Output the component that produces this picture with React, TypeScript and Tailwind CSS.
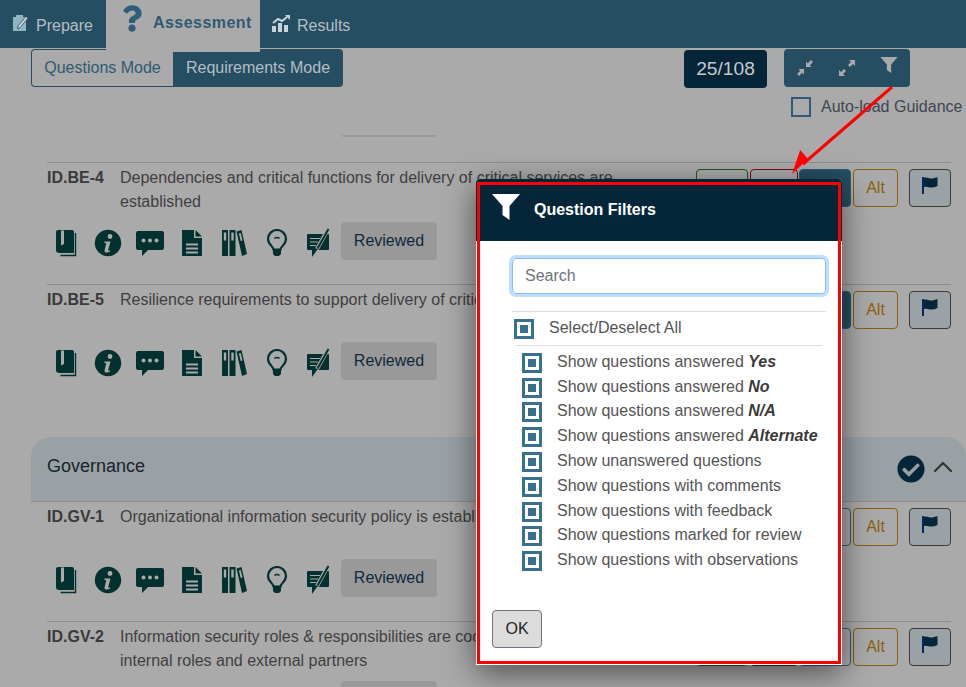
import { FaCheckCircle, FaQuestion } from "react-icons/fa";
import { ChevronUp } from "lucide-react";

const ICON = "#02312f";
const BG = "#aaaaaa";

function BookIcon() {
  return (
    <svg width="28" height="28" viewBox="0 0 28 28">
      <path fillRule="evenodd" fill={ICON} d="M6 1h14a2 2 0 0 1 2 2v21H7a3 3 0 0 1-3-3V3a2 2 0 0 1 2-2zM9 1.500v15l3-1.500v-13.500z" />
      <path d="M23.500 4v22.500H8.500" fill="none" stroke={ICON} strokeWidth="1.400" />
    </svg>
  );
}

function InfoIcon() {
  return (
    <svg width="28" height="28" viewBox="0 0 28 28">
      <circle cx="14" cy="14" r="13.200" fill={ICON} />
      <circle cx="16" cy="7.500" r="2.400" fill={BG} />
      <path d="M10.500 12.500h6l-2.300 8.500c-.2.800.4 1 1.900.3l-.3 1.500c-2 1-6 1.500-5.200-1.800l1.700-6.700-1.900-.4z" fill={BG} />
    </svg>
  );
}

function ChatIcon() {
  return (
    <svg width="28" height="28" viewBox="0 0 28 28">
      <path fill={ICON} d="M2 2h24a2 2 0 0 1 2 2v15a2 2 0 0 1-2 2H12l-6 6v-6H2a2 2 0 0 1-2-2V4a2 2 0 0 1 2-2z" />
      <circle cx="7.500" cy="11.500" r="2" fill={BG} />
      <circle cx="14" cy="11.500" r="2" fill={BG} />
      <circle cx="20.500" cy="11.500" r="2" fill={BG} />
    </svg>
  );
}

function FileIcon() {
  return (
    <svg width="28" height="28" viewBox="0 0 28 28">
      <path fillRule="evenodd" fill={ICON} d="M4 1h12v8h8v18H4zM8 14.500v2h12v-2zM8 18.500v2h12v-2zM8 22.500v2h12v-2z" />
      <path fill={ICON} d="M17.500 1l6.500 6.500h-6.500z" />
    </svg>
  );
}

function BooksIcon() {
  return (
    <svg width="28" height="28" viewBox="0 0 28 28">
      <path fillRule="evenodd" fill={ICON} d="M2 1h6v26H2zM3.800 3.500v8h2.400v-8z" />
      <path fillRule="evenodd" fill={ICON} d="M9.500 1h6v26h-6zM11.300 3.500v8h2.400v-8z" />
      <path fillRule="evenodd" fill={ICON} d="M16.500 2.500l5-1.500 5.500 24-5 2zM18.900 4.500l1.800 7.500 1.800-.5-1.800-7.500z" />
    </svg>
  );
}

function BulbIcon() {
  return (
    <svg width="28" height="28" viewBox="0 0 28 28">
      <path d="M10.500 20.500c0-3-5.500-5-5.500-10.500a9 9 0 0 1 18 0c0 5.500-5.500 7.500-5.500 10.500z" fill="none" stroke={ICON} strokeWidth="2.200" />
      <path d="M11.500 9.500a3.500 3.500 0 0 1 5 0" fill="none" stroke={ICON} strokeWidth="1.500" />
      <path fill={ICON} d="M10 20h8v5l-2 2h-4l-2-2z" />
    </svg>
  );
}

function NoteIcon() {
  return (
    <svg width="28" height="30" viewBox="0 0 28 30">
      <path fill={ICON} d="M4 6h20a1 1 0 0 1 1 1v14a1 1 0 0 1-1 1H13l-5 7v-7H4a1 1 0 0 1-1-1V7a1 1 0 0 1 1-1z" />
      <path stroke={BG} strokeWidth="1.200" d="M6 10.500h10M6 14h8M6 17.500h6" />
      <path d="M13 21L23.500 2" stroke={BG} strokeWidth="4" />
      <path d="M13.500 20.500L24.500 1" stroke={ICON} strokeWidth="2" />
    </svg>
  );
}

function Flag() {
  return (
    <svg width="16" height="17" viewBox="0 0 16 17">
      <path d="M0 0h2v17H0z" fill="#04285a" />
      <path d="M2 1c3-1.500 5 1 8 .5 2-.3 4-1 5.500-1.500v9c-2 1-4 1.500-6 1.500-3 0-5-1.500-7.500-.5z" fill="#042638" />
    </svg>
  );
}

function Funnel({ className }: { className: string }) {
  return (
    <svg className={className} viewBox="0 0 28 26">
      <path fill="currentColor" d="M0 0h28L17.500 12v14L10.500 21V12z" />
    </svg>
  );
}

function Check() {
  return (
    <span className="flex h-5 w-5 shrink-0 items-center justify-center border-[3px] border-[#39708f] bg-white">
      <span className="h-2 w-2 bg-[#39708f]" />
    </span>
  );
}

type Answer = "none" | "na" | "no";

function Row({
  id,
  text,
  answer = "none",
  wrapped = false,
  noBorder = false,
}: {
  id: string;
  text: string;
  answer?: Answer;
  wrapped?: boolean;
  noBorder?: boolean;
}) {
  return (
    <div className={`ml-[47px] mr-[15px] pb-6 ${noBorder ? "" : "border-t border-[#8e8e8e]"}`}>
      <div className="flex justify-between">
        <div className="flex pt-[3px]">
          <span className="w-[73px] shrink-0 font-bold text-[#3a3a3a]">{id}</span>
          <span className="min-h-12 w-[570px] leading-6 text-[#3f3f3f]">{text}</span>
        </div>
        <div className="flex items-start pt-[6px]">
          <button className="h-[38px] w-[52px] rounded border border-[#1d5b1d] text-[#1d5b1d]">Yes</button>
          <button className={`ml-[2px] h-[38px] w-[48px] rounded border border-[#7c0c0c] ${answer === "no" ? "bg-[#8f0f0f] text-[#ccc]" : "text-[#7c0c0c]"}`}>No</button>
          <button className={`ml-px h-[38px] w-[52px] rounded border border-[#2e5c78] ${answer === "na" ? "bg-[#254e63] text-[#ccc]" : "text-[#2e5c78]"}`}>N/A</button>
          <button className="ml-[2px] h-[38px] w-[45px] rounded border border-[#8a5f10] text-[#8a5f10]">Alt</button>
          <button className="ml-[11px] flex h-[38px] w-[42px] justify-center rounded border border-[#3a3a3a] bg-[#9aa2a6] pt-[7px]">
            <Flag />
          </button>
        </div>
      </div>
      <div className={`-ml-[2px] flex items-center ${wrapped ? "mt-[8px]" : "mt-[6px]"}`}>
        <span className="mt-[3px] flex w-[42px] justify-center"><BookIcon /></span>
        <span className="mt-[3px] flex w-[42px] justify-center"><InfoIcon /></span>
        <span className="mt-[3px] flex w-[42px] justify-center"><ChatIcon /></span>
        <span className="mt-[3px] flex w-[42px] justify-center"><FileIcon /></span>
        <span className="mt-[3px] flex w-[42px] justify-center"><BooksIcon /></span>
        <span className="mt-[3px] flex w-[42px] justify-center pl-[2px]"><BulbIcon /></span>
        <span className="mt-[3px] flex w-[42px] justify-center"><NoteIcon /></span>
        <button className="ml-[2px] h-[38px] w-[96px] rounded bg-[#999999] text-[#0d2a3a]">Reviewed</button>
      </div>
    </div>
  );
}

const filters = [
  ["Show questions answered ", "Yes"],
  ["Show questions answered ", "No"],
  ["Show questions answered ", "N/A"],
  ["Show questions answered ", "Alternate"],
  ["Show unanswered questions", ""],
  ["Show questions with comments", ""],
  ["Show questions with feedback", ""],
  ["Show questions marked for review", ""],
  ["Show questions with observations", ""],
];

function FilterModal() {
  return (
    <div className="absolute left-[476px] top-[179px] z-20 h-[486px] w-[366px] rounded-t bg-white shadow-[0_8px_32px_rgba(0,0,0,0.55)]">
      <div className="flex h-[62px] items-center rounded-t bg-[#042638] pl-4 text-white">
        <Funnel className="-mt-[6px] h-[26px] w-7" />
        <span className="ml-[14px] font-bold">Question Filters</span>
      </div>
      <div className="pl-9 pr-4">
        <input
          placeholder="Search"
          className="mt-[17px] h-9 w-[314px] rounded border border-[#80bdff] px-3 text-base shadow-[0_0_0_3px_rgba(0,123,255,0.25)] outline-none placeholder:text-[#6c757d]"
        />
        <div className="mt-[17px] flex h-[34px] items-center border-t border-[#dedede] pl-[2px] text-[#555555]">
          <Check />
          <span className="ml-[15px] -mt-[1px]">Select/Deselect All</span>
        </div>
        <div className="ml-1 mr-1 border-t border-[#dedede] pl-[6px] pt-[3.4px]">
          {filters.map(([label, strong]) => (
            <div key={label + strong} className="flex h-[24.8px] items-center text-[#555555]">
              <span className="mt-[2px]"><Check /></span>
              <span className="ml-[15px] whitespace-pre">
                {label}
                {strong && <b className="italic text-[#3b3b3b]">{strong}</b>}
              </span>
            </div>
          ))}
        </div>
      </div>
      <button className="ml-4 mt-[37px] h-[38px] w-[50px] rounded border border-[#6c757d] bg-[#dcdcdc] text-[#212529]">OK</button>
      {/* annotation box */}
      <div className="pointer-events-none absolute bottom-[1px] left-px right-px top-[3px] border-[3px] border-[#ff0000]" />
    </div>
  );
}

export default function App() {
  return (
    <div className="relative h-[687px] w-[966px] overflow-hidden bg-[#aaaaaa] font-['Liberation_Sans',Arial,sans-serif] text-base text-[#3f3f3f]">
      {/* Nav */}
      <nav className="flex h-12 bg-[#254e63]">
        <a className="flex h-12 w-[106px] items-center pl-3 text-[#b3bfc5]">
          <svg className="-mt-[2px]" width="17" height="17" viewBox="0 0 17 17">
            <path fill="#8fb5c0" d="M1 2h3V0h7v2h3v14H1z" />
            <path d="M6 11L14 1.500l2 1.700-8 9.500-2.500 1z" fill="#c9d6da" stroke="#254e63" strokeWidth=".8" />
          </svg>
          <span className="ml-[7px] mt-[3px]">Prepare</span>
        </a>
        <a className="relative z-10 flex h-[52px] w-[154px] items-start bg-[#aaaaaa] pl-4 text-[#2f5a72]">
          <FaQuestion className="mt-[5px] h-[27px] w-5 text-[#2f5f78]" />
          <span className="ml-[11px] mt-[11px] font-bold tracking-[0.45px]">Assessment</span>
        </a>
        <a className="flex h-12 items-center pl-3 text-[#b3bfc5]">
          <svg className="-mt-[2px]" width="19" height="17" viewBox="0 0 19 17">
            <path fill="#c8d4d9" d="M0 11h4v6H0zM6 8h4v9H6zM12 10h4v7h-4z" />
            <path d="M1 8l5-4 4 2 5-4" fill="none" stroke="#c8d4d9" strokeWidth="2" />
            <path fill="#c8d4d9" d="M13 0h5v5z" />
          </svg>
          <span className="ml-[6px] mt-[3px]">Results</span>
        </a>
      </nav>

      {/* Toolbar */}
      <div className="flex justify-between pl-[31px] pt-px">
        <div className="flex h-[38px] self-start">
          <button className="h-[38px] w-[142px] rounded-l border border-r-0 border-[#254e63] text-[#2f5a72]">Questions Mode</button>
          <button className="h-[38px] w-[170px] rounded-r bg-[#254e63] text-[#b3bfc5]">Requirements Mode</button>
        </div>
        <div className="w-[282px]">
          <div className="flex items-start">
            <div className="mt-px flex h-[38px] w-[83px] items-center justify-center rounded bg-[#042638] text-[19.2px] text-[#c4c9cc]">25/108</div>
            <div className="ml-[17px] flex h-[38px] w-[126px] rounded bg-[#254e63] text-[#aaaaaa]">
              <span className="flex w-[42px] items-center justify-center">
                <svg width="16" height="16" viewBox="0 0 16 16">
                  <path fill="currentColor" d="M9 7V1.500l1.800 1.700L14 0l2 2-3.200 3.200L14.500 7zM7 9v5.500l-1.800-1.700L2 16l-2-2 3.200-3.200L1.500 9z" />
                </svg>
              </span>
              <span className="flex w-[42px] items-center justify-center">
                <svg width="16" height="16" viewBox="0 0 16 16">
                  <path fill="currentColor" d="M0 16v-6l2 2 3-3 2 2-3 3 2 2zM16 0v6l-2-2-3 3-2-2 3-3-2-2z" />
                </svg>
              </span>
              <span className="flex w-[42px] items-start justify-center pt-2">
                <Funnel className="h-4 w-[18px]" />
              </span>
            </div>
          </div>
          <label className="ml-[107px] mt-[7px] flex items-center whitespace-nowrap text-[#3d4650]">
            <span className="h-5 w-5 shrink-0 border-2 border-[#2e5c78]" />
            <span className="ml-[10px]">Auto-load Guidance</span>
          </label>
        </div>
      </div>

      {/* Rest of the previous row */}
      <div className="ml-[342px] mt-[16px] h-[2px] w-[94px] rounded-b bg-[#999999]" />

      <div className="mt-[25px]">
        <Row id="ID.BE-4" text="Dependencies and critical functions for delivery of critical services are established" answer="na" wrapped />
        <Row id="ID.BE-5" text="Resilience requirements to support delivery of critical services are established" answer="na" />
      </div>

      {/* Governance */}
      <div className="ml-[31px] mt-[33px] flex h-[65px] items-center rounded-t-[20px] border-b border-[#8e8e8e] bg-[#99a1a5] pl-4 pr-[7px]">
        <span className="-mt-[5px] text-[18px] text-[#16242c]">Governance</span>
        <FaCheckCircle className="ml-auto h-7 w-7 text-[#042638]" />
        <ChevronUp className="ml-[2px] -mt-[5px] h-8 w-8 text-[#333333]" strokeWidth={1.6} />
      </div>
      <Row id="ID.GV-1" text="Organizational information security policy is established" noBorder />
      <Row id="ID.GV-2" text="Information security roles & responsibilities are coordinated and aligned with internal roles and external partners" answer="no" wrapped />

      <FilterModal />

      {/* Annotation arrow */}
      <svg className="absolute left-[785px] top-[80px] z-30" width="115" height="100" viewBox="0 0 115 100">
        <path d="M107 7L18 84" stroke="#ff0000" strokeWidth="3" fill="none" />
        <path d="M7 94L23 79 15.200 70z" fill="#ff0000" />
      </svg>
    </div>
  );
}
